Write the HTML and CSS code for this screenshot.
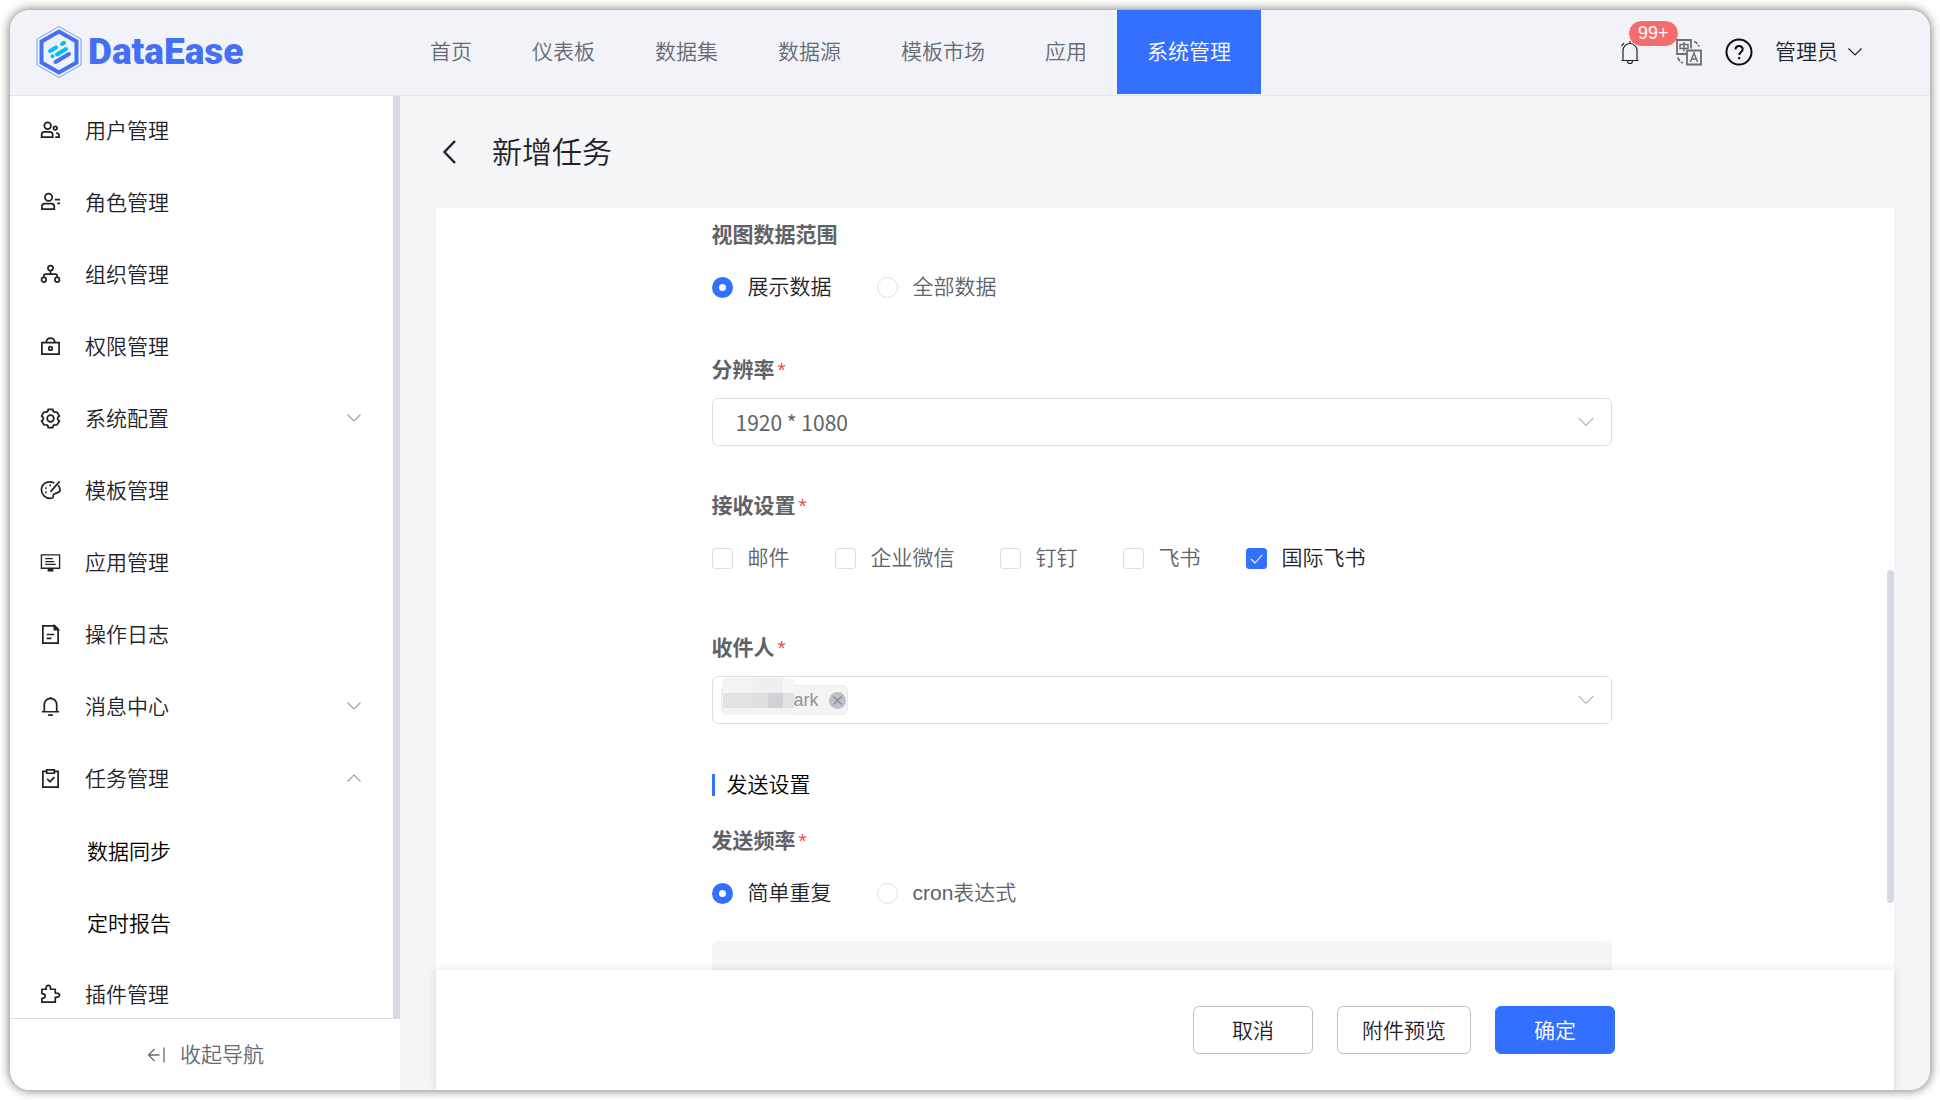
FILE: index.html
```html
<!DOCTYPE html>
<html lang="zh-CN">
<head>
<meta charset="utf-8">
<title>DataEase - 新增任务</title>
<link rel="stylesheet" href="styles.css">
</head>
<body>
<svg class="sprite" aria-hidden="true">
  <symbol id="chevron" viewBox="0 0 16 16"><path d="M1.500 4.500 8 11l6.500-6.500" fill="none" stroke="currentColor" stroke-width="1.200"/></symbol>
</svg>
<div class="window">
  <header class="topbar">
    <a class="logo" href="#">
      <svg class="logo-mark" viewBox="0 0 46 54" aria-hidden="true">
        <path d="M23 1.500 45 14v26L23 52.500 1 40V14z" fill="none" stroke="#7f9bf5" stroke-width="1"/>
        <path d="M23 6.500 40.500 16.500v21L23 47.500 5.500 37.500v-21z" fill="#f1f3f8" stroke="#4370f5" stroke-width="4"/>
        <g stroke-linecap="round" stroke-width="4" fill="none">
          <path d="M14 26l6-3.500M26 19l2-1.200M21 29.500 30 24M16.500 31.200v.1" stroke="#00bfff"/>
          <path d="M19.500 37 33 29" stroke="#4370f5"/>
        </g>
      </svg>
      <span class="logo-text">DataEase</span>
    </a>
    <nav class="tabs">
      <a href="#">首页</a><a href="#">仪表板</a><a href="#">数据集</a><a href="#">数据源</a><a href="#">模板市场</a><a href="#">应用</a><a href="#" class="active" aria-current="page">系统管理</a>
    </nav>
    <div class="tools">
      <button class="tool bell" aria-label="消息">
        <svg width="20" height="26" viewBox="0 0 20 26" fill="none" stroke="#1f2329" stroke-width="1.200"><path d="M3 21.500V11.500a7 7 0 0 1 14 0v10M1.500 21.500h17M10 2V4.500M7.500 22a2.500 2.500 0 0 0 5 0M1.500 7 4 4.200M18.500 7 16 4.200"/></svg>
        <span class="badge">99+</span>
      </button>
      <button class="tool" aria-label="语言">
        <svg width="28" height="28" viewBox="0 0 28 28" fill="none" stroke="#6a6d73" stroke-width="1.800"><path d="M11.500 16H2V2h14v8.500M12 12.500h14v14H12z"/><path d="M19 3.500a7 7 0 0 1 5 5M3 19.500a7 7 0 0 0 5 5.500" stroke-dasharray="4 1.500"/><path d="M5 6.500h8v4H5zM9 4v9.500M15.500 24 19 15l3.500 9M16.800 21h4.400" stroke-width="1.500"/></svg>
      </button>
      <button class="tool" aria-label="帮助">
        <svg width="28" height="28" viewBox="0 0 28 28" fill="none" stroke="#0b0c0e" stroke-width="2"><circle cx="14" cy="14" r="12.500"/><path d="M10.500 11.500c0-4.500 7.200-4.500 7.200-.3 0 2.600-3.500 2.900-3.500 5.800M14.200 19v2.300"/></svg>
      </button>
      <button class="user">管理员<svg width="16" height="16"><use href="#chevron"/></svg></button>
    </div>
  </header>
  <div class="body">
    <aside class="sidebar">
      <nav class="menu">
        <a href="#"><svg viewBox="0 0 22 22"><circle cx="8" cy="6" r="3.500"/><path d="M1.700 18v-2.500q0-3 3-3h5.600q3 0 3 3V18zM16 18h4v-1.500q0-2.500-3-3"/><circle cx="16" cy="8.500" r="1.900"/></svg>用户管理</a>
        <a href="#"><svg viewBox="0 0 22 22"><circle cx="9" cy="5.500" r="3.800"/><path d="M2 18v-2.500q0-3.300 3-3.300h7q3 0 3 3.300V18zM15.500 8H21M18 12h3"/></svg>角色管理</a>
        <a href="#"><svg viewBox="0 0 22 22"><circle cx="11" cy="4.300" r="2.700"/><circle cx="4" cy="16.500" r="2.400"/><circle cx="18" cy="16.500" r="2.400"/><path d="M11 7v3.500M4 14v-1.500q0-2 2-2h10q2 0 2 2V14"/></svg>组织管理</a>
        <a href="#"><svg viewBox="0 0 22 22"><path d="M2 7h18v12H2zM6.500 7c0-6.500 9-6.500 9 0"/><circle cx="11" cy="13" r="1.800"/></svg>权限管理</a>
        <a href="#"><svg viewBox="0 0 22 22"><path d="M8.700 1.500h4.600q.3 2.900 2.700 2.700l2 .2 2.300 4q-2 1.300-2 2.600t2 2.600l-2.300 4-2 .2q-2.400-.2-2.700 2.700H8.700Q8.400 17.600 6 17.800l-2-.2-2.300-4q2-1.300 2-2.600t-2-2.600l2.300-4 2-.2q2.400.2 2.700-2.700z"/><circle cx="11" cy="11" r="3.500"/></svg>系统配置<svg class="arrow"><use href="#chevron"/></svg></a>
        <a href="#"><svg viewBox="0 0 22 22"><path d="M15 3.200C8-.2 1.500 4 1.500 10.200c0 5 4 9 9.500 9 3 0 3-1.500 3-3.200 0-3.500 7-1 7-5.500 0-2-.8-3.700-2-5M20.500 1.500 11 12.500"/><path d="M5.500 8.500h1.500M10 5.500h1.500M5.500 13H7" stroke-width="2"/></svg>模板管理</a>
        <a href="#"><svg viewBox="0 0 22 22"><path d="M1.500 3h19v14h-19zM5.500 7h8M5.500 10h9.500M5.500 13h11" stroke-width="1.400"/><path d="M8 19h6" stroke-width="3"/></svg>应用管理</a>
        <a href="#"><svg viewBox="0 0 22 22"><path d="M3 2h12.500l3.500 3.500V20H3zM7 11h8M7 15h5"/><path d="M15 2v4h4z" fill="currentColor"/></svg>操作日志</a>
        <a href="#"><svg viewBox="0 0 22 22"><path d="M4.500 16V9a6.500 6.500 0 0 1 13 0v7M2 16.500h18M11 1v2M8.500 20h5"/></svg>消息中心<svg class="arrow"><use href="#chevron"/></svg></a>
        <a href="#"><svg viewBox="0 0 22 22"><path d="M7 3.500H3V20h16V3.500h-4M7 2h8v3.500H7zM7.500 11.500l3 3 4.500-5"/></svg>任务管理<svg class="arrow up"><use href="#chevron"/></svg></a>
        <a href="#" class="sub">数据同步</a>
        <a href="#" class="sub">定时报告</a>
        <a href="#"><svg viewBox="0 0 22 22"><path d="M2 5.500h4.500c-1-5.500 5.500-5.500 4.500 0h5V9.500c6-.5 6 5 0 4.500v5H2v-4c4.500 0 4.500-5 0-5z" stroke-linejoin="round"/></svg>插件管理</a>
      </nav>
      <button class="collapse"><svg width="20" height="20" viewBox="0 0 20 20" fill="none" stroke="currentColor" stroke-width="1.300"><path d="M13.500 10h-11M8.500 4 2.500 10l6 6M18 2.500v15"/></svg>收起导航</button>
    </aside>
    <main class="main">
      <div class="heading">
        <button class="back" aria-label="返回"><svg width="16" height="26" viewBox="0 0 16 26" fill="none" stroke="currentColor" stroke-width="2.400"><path d="M13 2 2.500 13 13 24"/></svg></button>
        <h1>新增任务</h1>
      </div>
      <div class="card">
        <form class="form" id="task">
          <div class="field range">
            <h2>视图数据范围</h2>
            <div class="options">
              <label class="on"><input type="radio" name="range" checked>展示数据</label>
              <label><input type="radio" name="range">全部数据</label>
            </div>
          </div>
          <div class="field">
            <label class="title" for="ratio">分辨率<i>*</i></label>
            <div class="select">
              <select id="ratio"><option>1920 * 1080</option></select>
              <svg><use href="#chevron"/></svg>
            </div>
          </div>
          <div class="field channels">
            <h2>接收设置<i>*</i></h2>
            <div class="options">
              <label><input type="checkbox">邮件</label>
              <label><input type="checkbox">企业微信</label>
              <label><input type="checkbox">钉钉</label>
              <label><input type="checkbox">飞书</label>
              <label class="on"><input type="checkbox" checked>国际飞书</label>
            </div>
          </div>
          <div class="field">
            <label class="title" for="receiver">收件人<i>*</i></label>
            <div class="select multi">
              <span class="tag">
                <svg class="mosaic" viewBox="0 0 71 37" shape-rendering="crispEdges" aria-hidden="true">
                  <path fill="#f3f3f4" d="M0 0h71v37H0z"/><path fill="#eeeff0" d="M30 0h30v15H30z"/><path fill="#f7f7f7" d="M60 0h11v15H60z"/>
                  <path fill="#e2e2e4" d="M0 15h71v15H0z"/><path fill="#dddee0" d="M30 15h15v15H30z"/><path fill="#d1d1d7" d="M45 15h15v15H45z"/>
                </svg>ark<button type="button" aria-label="移除"><svg width="17" height="17" viewBox="0 0 17 17"><circle cx="8.500" cy="8.500" r="8.500" fill="#bcc0c9"/><path d="m4.500 4.500 8 8m0-8-8 8" stroke="#858a94" stroke-width="1.200"/></svg></button>
              </span>
              <input id="receiver" type="text">
              <svg><use href="#chevron"/></svg>
            </div>
          </div>
          <div class="section">发送设置</div>
          <div class="field frequency">
            <h2>发送频率<i>*</i></h2>
            <div class="options">
              <label class="on"><input type="radio" name="freq" checked>简单重复</label>
              <label><input type="radio" name="freq">cron表达式</label>
            </div>
          </div>
          <div class="panel"></div>
        </form>
        <div class="thumb"></div>
        <footer class="actions">
          <div class="buttons">
            <button>取消</button><button>附件预览</button><button class="primary" form="task">确定</button>
          </div>
        </footer>
      </div>
    </main>
  </div>
</div>
</body>
</html>
```
FILE: styles.css
```css
* { box-sizing: border-box; }
body {
  margin: 0;
  height: 100vh;
  padding: 10px;
  background: #fff;
  color: #1f2329;
  font: 350 21px/32px "Liberation Sans", "Noto Sans CJK SC", sans-serif;
}
button, input, select { font: inherit; color: inherit; }
button { padding: 0; border: 0; background: none; cursor: pointer; }
a { color: inherit; text-decoration: none; }
.sprite { position: absolute; width: 0; height: 0; }

.window {
  height: 100%;
  display: flex;
  flex-direction: column;
  overflow: hidden;
  border-radius: 20px;
  background: #f4f5f7;
  box-shadow: 0 0 10px 1px rgba(0, 0, 0, .5);
}

.topbar {
  flex: none;
  height: 86px;
  display: flex;
  background: #f1f3f8;
  border-bottom: 1px solid #e3e5ea;
}
.logo {
  width: 390px;
  height: 84px;
  padding-left: 26px;
  display: flex;
  align-items: center;
  gap: 6px;
}
.logo-mark { width: 46px; height: 54px; }
.logo-text { font: 900 37px/40px Roboto, sans-serif; color: #4370f5; }
.tabs { display: flex; height: 84px; line-height: 84px; color: #646a73; }
.tabs a { padding: 0 30px; }
.tabs .active { background: #3370ff; color: #fff; }
.tools {
  height: 84px;
  margin-left: auto;
  padding-right: 67px;
  display: flex;
  align-items: center;
}
.tool { position: relative; display: flex; margin-right: 22px; }
.bell { margin-right: 35px; }
.badge {
  position: absolute;
  left: 8px;
  top: -19px;
  height: 27px;
  padding: 0 9px;
  border: 1px solid #fff;
  border-radius: 14px;
  background: #f56c6c;
  color: #fff;
  font-size: 18px;
  line-height: 25px;
}
.user { display: flex; align-items: center; gap: 9px; }

.body { flex: 1; min-height: 0; display: flex; }
.sidebar { flex: none; width: 390px; display: flex; flex-direction: column; background: #fff; }
.menu { flex: 1; min-height: 0; overflow: hidden; border-right: 7px solid #d7dae2; }
.menu a { height: 72px; padding: 0 31px 2px 30px; display: flex; align-items: center; gap: 24px; }
.menu svg { width: 21px; height: 21px; margin-bottom: 2px; fill: none; stroke: currentColor; stroke-width: 1.8; }
.menu .arrow { width: 16px; height: 16px; margin-left: auto; color: #9b9fa6; }
.menu .up { transform: rotate(180deg); }
.menu .sub { padding: 0 0 0 77px; color: #000; }
.collapse {
  flex: none;
  height: 72px;
  border-top: 1px solid #dcdde0;
  display: flex;
  align-items: center;
  justify-content: center;
  gap: 14px;
  color: #646a73;
}

.main { flex: 1; min-width: 0; display: flex; flex-direction: column; padding: 0 36px; }
.heading { flex: none; height: 112px; padding-left: 6px; display: flex; align-items: center; gap: 34px; }
.back { display: flex; }
h1 { margin: 0; padding-top: 2px; font-size: 30px; line-height: 40px; font-weight: 350; }
.card { position: relative; flex: 1; min-height: 0; display: flex; flex-direction: column; background: #fff; }
.form { flex: 1; min-height: 0; overflow: hidden; padding: 11px 7px 0 0; display: flex; flex-direction: column; align-items: center; color: #606266; }
.form > * { flex: none; width: 900px; max-width: 100%; }
.field { padding-bottom: 44px; }
.range { padding-bottom: 51px; }
.channels { padding-bottom: 58px; }
h2, .title { display: block; margin: 0; font-size: 21px; line-height: 32px; font-weight: 700; }
h2 i, .title i { margin-left: 3px; font-style: normal; font-weight: 400; color: #f54a45; }
.options { display: flex; gap: 45px; margin-top: 20px; }
.options label { display: flex; align-items: center; gap: 15px; line-height: 32px; }
.options .on { color: #1f2329; }
.options input {
  appearance: none;
  width: 21px;
  height: 21px;
  margin: 0;
  border: 1px solid #dcdfe6;
  border-radius: 3px;
  background: #fff;
}
.options [type="radio"] { border-radius: 50%; }
.options [type="radio"]:checked { border: 7px solid #3370ff; }
.options [type="checkbox"]:checked {
  border-color: #3370ff;
  background: #3370ff url("data:image/svg+xml,%3Csvg xmlns='http://www.w3.org/2000/svg' viewBox='0 0 19 19'%3E%3Cpath d='M4 10l4 4 7.500-8.500' fill='none' stroke='white' stroke-width='1.100'/%3E%3C/svg%3E");
}
.select {
  height: 48px;
  margin-top: 12px;
  padding: 0 16px 0 8px;
  display: flex;
  align-items: center;
  border: 1px solid #dcdfe6;
  border-radius: 6px;
}
.select select, .select input {
  flex: 1;
  min-width: 0;
  height: 44px;
  padding: 0 15px;
  border: 0;
  outline: 0;
  appearance: none;
  background: none;
  font-family: "Noto Sans CJK SC", sans-serif;
  font-weight: 400;
}
.select > svg { width: 18px; height: 18px; color: #b6bbc6; }
.tag {
  position: relative;
  height: 30px;
  padding: 0 1px 0 72px;
  display: flex;
  align-items: center;
  gap: 10px;
  border: 1px solid #e9e9eb;
  border-radius: 6px;
  background: #f4f4f5;
  color: #909399;
  font-size: 18px;
}
.tag button { display: flex; }
.mosaic { position: absolute; left: 1px; bottom: -1px; width: 71px; height: 37px; }
.section { display: flex; align-items: center; gap: 12px; margin-bottom: 24px; padding-top: 1px; line-height: 32px; color: #000; }
.section::before { content: ""; width: 3px; height: 22px; background: #3370ff; }
.frequency { padding-bottom: 32px; }
.panel { height: 120px; border-radius: 6px; background: #f4f5f7; }
.thumb { position: absolute; right: 0; top: 41%; width: 7px; height: 333px; border-radius: 4px; background: #d7dae2; }
.actions {
  position: relative;
  flex: none;
  height: 120px;
  display: flex;
  justify-content: center;
  align-items: center;
  background: #fff;
  box-shadow: 0 0 8px rgba(31, 35, 41, .15);
}
.buttons { width: 900px; display: flex; justify-content: flex-end; gap: 24px; }
.buttons button {
  height: 48px;
  min-width: 120px;
  padding: 2px 24px 0;
  border: 1px solid #bbbfc4;
  border-radius: 6px;
  background: #fff;
}
.buttons .primary { border-color: #3370ff; background: #3370ff; color: #fff; }
```
